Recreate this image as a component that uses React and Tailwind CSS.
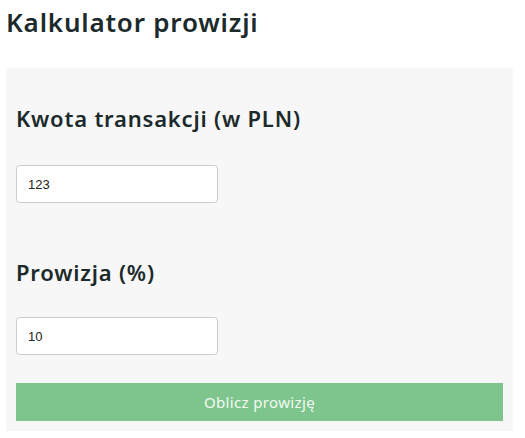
import React, { useState } from 'react';

const headFont = { fontFamily: '"Noto Sans", "Open Sans", sans-serif' };

export default function App() {
  const [amount, setAmount] = useState('123');
  const [rate, setRate] = useState('10');

  return (
    <div className="bg-white min-h-screen pl-[6px] pr-[12px] pt-[4px] text-[#1c2a2b]" style={headFont}>
      <h1 className="text-[26px] leading-[36px] font-semibold tracking-[0.8px]">Kalkulator prowizji</h1>

      <div className="mt-[28px] bg-[#f7f7f7] px-[10px] pt-[35px] pb-[10px]">
        <label className="block text-[22px] leading-[30px] font-semibold tracking-[0.8px]">Kwota transakcji (w PLN)</label>
        <input
          value={amount}
          onChange={e => setAmount(e.target.value)}
          className="mt-[32px] block w-[202px] h-[38px] bg-white border border-[#cccccc] rounded-[4px] px-[11px] text-[13px] text-[#222] outline-none"
          style={{ fontFamily: '"Liberation Sans", Arial, sans-serif' }}
        />

        <label className="mt-[54px] block text-[22px] leading-[30px] font-semibold tracking-[0.8px]">Prowizja (%)</label>
        <input
          value={rate}
          onChange={e => setRate(e.target.value)}
          className="mt-[30px] block w-[202px] h-[38px] bg-white border border-[#cccccc] rounded-[4px] px-[11px] text-[13px] text-[#222] outline-none"
          style={{ fontFamily: '"Liberation Sans", Arial, sans-serif' }}
        />

        <button className="mt-[28px] w-full h-[38px] bg-[#7dc58c] text-[#f2faf3] text-[15px] tracking-[0.35px]">
          Oblicz prowizję
        </button>
      </div>
    </div>
  );
}
